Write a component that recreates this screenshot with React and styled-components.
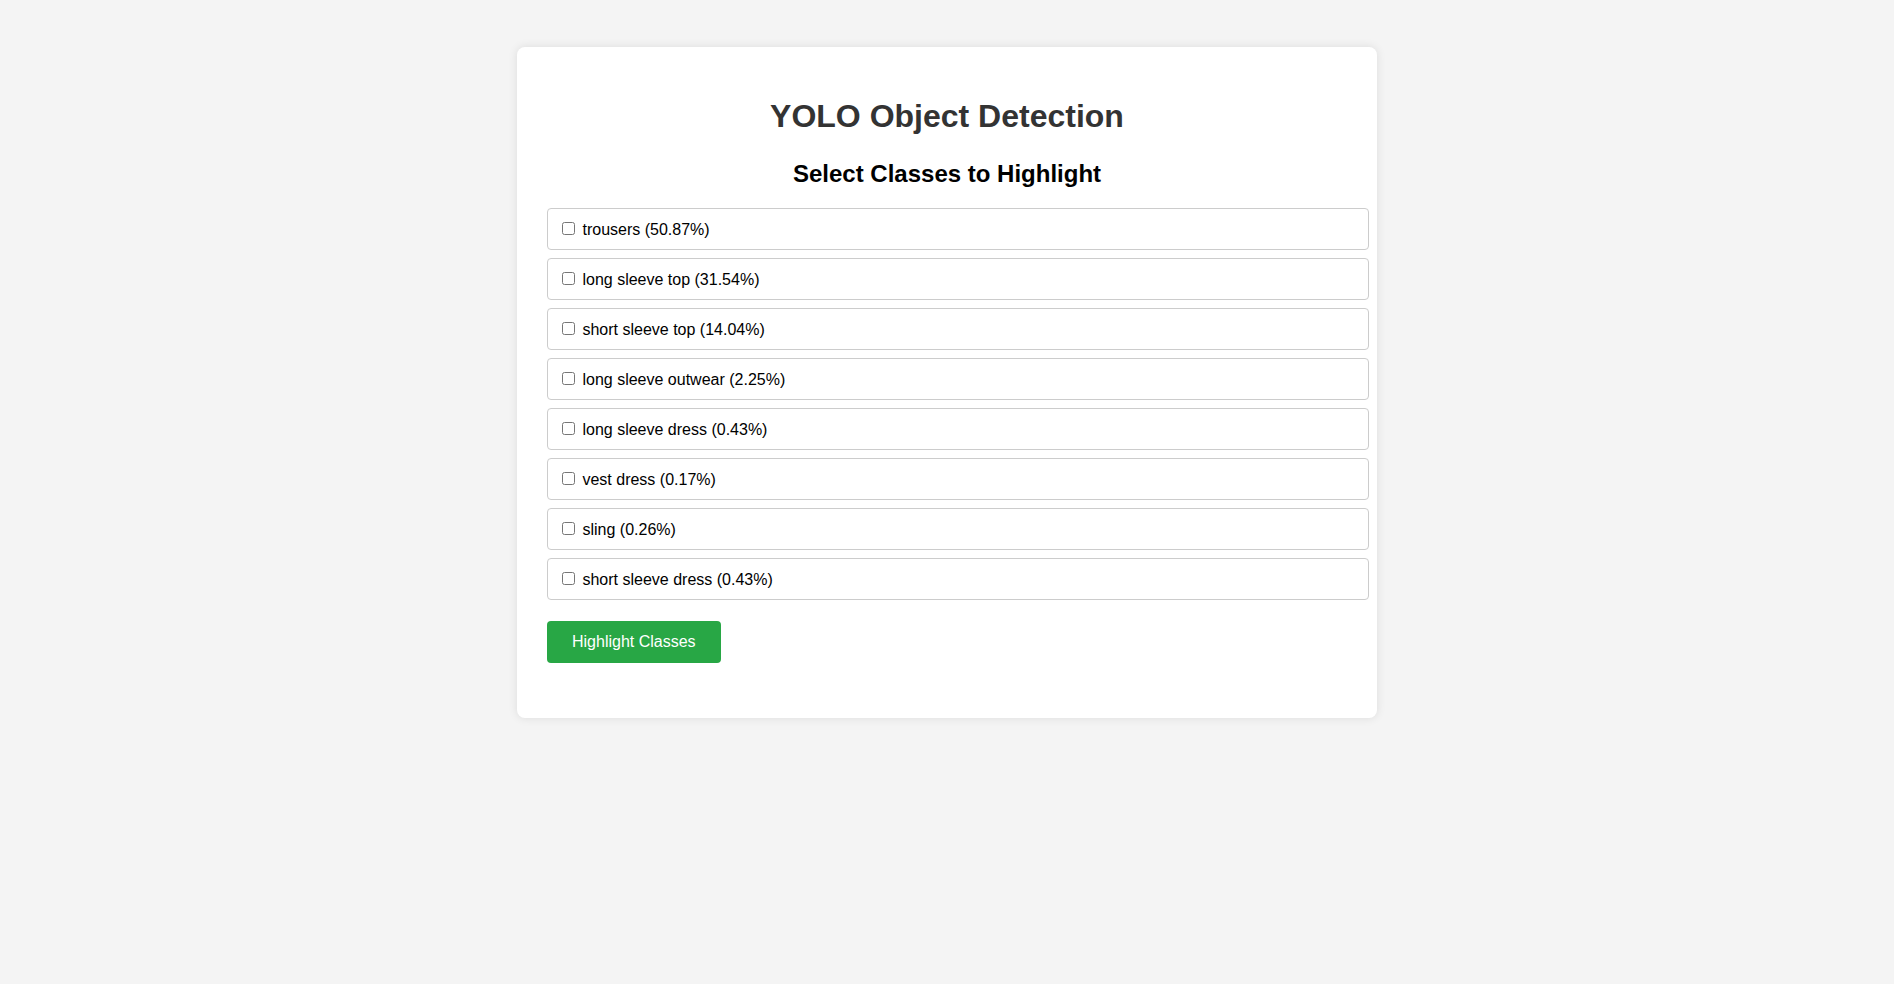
import React from "react";
import styled, { createGlobalStyle } from "styled-components";

const GlobalStyle = createGlobalStyle`
  html, body {
    margin: 0;
    padding: 0;
    background: #f4f4f4;
    font-family: "Liberation Sans", Arial, sans-serif;
  }
`;

const Page = styled.div`
  min-height: 984px;
  padding-top: 47px;
  box-sizing: border-box;
`;

const Card = styled.div`
  width: 800px;
  margin: 0 auto;
  padding: 30px 30px 55px;
  background: #fff;
  border-radius: 8px;
  box-shadow: 0 0 10px rgba(0, 0, 0, 0.1);
`;

const Title = styled.h1`
  margin: 21px 0 25px;
  font-size: 32px;
  font-weight: bold;
  color: #333;
  text-align: center;
`;

const Subtitle = styled.h2`
  margin: 0 0 20px;
  font-size: 24px;
  font-weight: bold;
  color: #000;
  text-align: center;
`;

const ClassItem = styled.label`
  display: block;
  width: 100%;
  height: 20px;
  line-height: 20px;
  padding: 11px 10px 9px;
  margin-bottom: 8px;
  border: 1px solid #ccc;
  border-radius: 4px;
  font-size: 16px;
  color: #000;
  background: #fff;
`;

const Checkbox = styled.input`
  width: 13px;
  height: 13px;
  margin: 2px 3px 3px 4px;
  vertical-align: top;
`;

const Button = styled.button`
  margin-top: 13px;
  padding: 12px 25px;
  background: #28a745;
  color: #fff;
  border: none;
  border-radius: 4px;
  font-family: "Liberation Sans", Arial, sans-serif;
  font-size: 16px;
  line-height: 18px;
  cursor: pointer;
`;

const classes = [
  "trousers (50.87%)",
  "long sleeve top (31.54%)",
  "short sleeve top (14.04%)",
  "long sleeve outwear (2.25%)",
  "long sleeve dress (0.43%)",
  "vest dress (0.17%)",
  "sling (0.26%)",
  "short sleeve dress (0.43%)",
];

export default function App() {
  return (
    <>
      <GlobalStyle />
      <Page>
        <Card>
          <Title>YOLO Object Detection</Title>
          <Subtitle>Select Classes to Highlight</Subtitle>
          {classes.map((c) => (
            <ClassItem key={c}>
              <Checkbox type="checkbox" /> {c}
            </ClassItem>
          ))}
          <Button>Highlight Classes</Button>
        </Card>
      </Page>
    </>
  );
}
